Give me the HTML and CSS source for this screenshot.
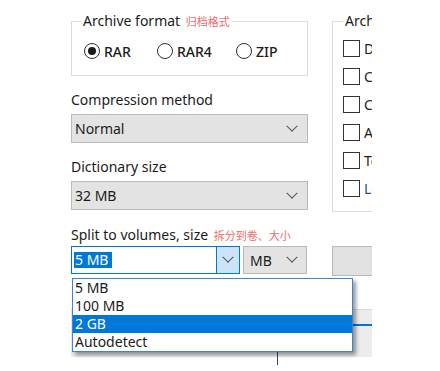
FILE: index.html
```html
<!DOCTYPE html>
<html>
<head>
<meta charset="utf-8">
<link rel="stylesheet" href="styles.css">
</head>
<body>
<div class="dialog">
  <div class="top">
    <div class="left">
      <fieldset class="group format">
        <legend>Archive format <span class="cn">归档格式</span></legend>
        <div class="radios">
          <label class="radio r1"><span class="circle checked"></span>RAR</label>
          <label class="radio r2"><span class="circle"></span>RAR4</label>
          <label class="radio r3"><span class="circle"></span>ZIP</label>
        </div>
      </fieldset>
      <div class="label l1">Compression method</div>
      <div class="select">Normal<span class="chev"></span></div>
      <div class="label l2">Dictionary size</div>
      <div class="select">32 MB<span class="chev"></span></div>
    </div>
    <fieldset class="group options">
      <legend>Archive options</legend>
      <div class="checks">
        <div class="check"><span class="box"></span>Delete files after archiving</div>
        <div class="check"><span class="box"></span>Create SFX archive</div>
        <div class="check"><span class="box"></span>Create solid archive</div>
        <div class="check"><span class="box"></span>Add recovery record</div>
        <div class="check"><span class="box"></span>Test archived files</div>
        <div class="check lock"><span class="box"></span>Lock archive</div>
      </div>
    </fieldset>
  </div>
  <div class="label l3">Split to volumes, size <span class="cn">拆分到卷、大小</span></div>
  <div class="split-row">
    <div class="combo">
      <span class="sel-text">5 MB</span>
      <span class="combo-btn"><span class="chev"></span></span>
    </div>
    <div class="select unit">MB<span class="chev"></span></div>
    <div class="button"></div>
  </div>
  <div class="strip">
    <div class="ok"></div>
  </div>
  <ul class="dropdown">
    <li>5 MB</li>
    <li>100 MB</li>
    <li class="active">2 GB</li>
    <li>Autodetect</li>
  </ul>
</div>
</body>
</html>
```
FILE: styles.css
```css
html, body {
  margin: 0;
  padding: 0;
  background: #fff;
}
body {
  font-family: "Noto Sans", "Noto Sans CJK SC", sans-serif;
  font-size: 14px;
  color: #1b1b1b;
}
.dialog {
  position: relative;
  margin-left: 71px;
  width: 301px;
  height: 371px;
  overflow: hidden;
}
.top {
  display: flex;
  align-items: flex-start;
  gap: 24px;
  padding-top: 12px;
}
.left {
  width: 237px;
  flex: none;
}
.group {
  margin: 0;
  border: 1px solid #dcdcdc;
  padding: 0 0 0 9px;
  min-width: 0;
}
.group legend {
  padding: 0 2px;
  line-height: 18px;
  height: 18px;
  white-space: nowrap;
}
.cn {
  font-family: "Noto Sans CJK SC", sans-serif;
  font-size: 11px;
  color: #f06a6a;
  margin-left: 2px;
}
.format {
  width: 237px;
  box-sizing: border-box;
  height: 64px;
  padding-top: 12px;
}
.radios {
  display: flex;
  align-items: center;
  height: 18px;
  margin-left: 3px;
}
.radio {
  display: flex;
  align-items: center;
  gap: 4px;
  font-weight: 500;
}
.r1 { width: 73px; }
.r2 { width: 79px; }
.circle {
  width: 14px;
  height: 14px;
  border: 1.5px solid #333;
  border-radius: 50%;
  display: flex;
  align-items: center;
  justify-content: center;
}
.circle.checked::after {
  content: "";
  width: 8px;
  height: 8px;
  border-radius: 50%;
  background: #1b1b1b;
}
.label {
  line-height: 18px;
  height: 18px;
  white-space: nowrap;
}
.l1 { margin-top: 15px; }
.l2 { margin-top: 15px; }
.select {
  position: relative;
  margin-top: 5px;
  height: 29px;
  box-sizing: border-box;
  background: #e3e3e3;
  border: 1px solid #b9b9b9;
  display: flex;
  align-items: center;
  padding-left: 3px;
}
.select .chev {
  margin-left: auto;
  margin-right: 11px;
}
.chev {
  width: 7px;
  height: 7px;
  border-right: 1.3px solid #555;
  border-bottom: 1.3px solid #555;
  transform: rotate(45deg) translate(-2px, -2px);
}
.options {
  flex: none;
  width: 200px;
  height: 200px;
  box-sizing: border-box;
  padding-left: 10px;
}
.checks {
  display: flex;
  flex-direction: column;
  gap: 11px;
  padding-top: 10px;
}
.check {
  display: flex;
  align-items: center;
  gap: 4px;
  height: 17px;
  white-space: nowrap;
}
.check.lock { color: #2a4f8f; }
.box {
  width: 15px;
  height: 15px;
  border: 1px solid #333;
  flex: none;
}
.l3 { margin-top: 14px; }
.split-row {
  display: flex;
  align-items: flex-start;
  margin-top: 2px;
}
.split-row > * { flex: none; }
.combo {
  width: 169px;
  height: 28px;
  box-sizing: border-box;
  border: 1px solid #0078d7;
  background: #fff;
  display: flex;
  align-items: center;
  padding-left: 2px;
}
.sel-text {
  background: #0078d7;
  color: #fff;
  line-height: 16px;
  padding: 0 4px 0 1px;
}
.combo-btn {
  margin-left: auto;
  width: 23px;
  height: 26px;
  box-sizing: border-box;
  background: #cce4f7;
  border-left: 1px solid #0078d7;
  display: flex;
  align-items: center;
  justify-content: center;
}
.select.unit {
  margin-top: 0;
  margin-left: 3px;
  width: 64px;
  height: 28px;
  padding-left: 6px;
}
.select.unit .chev { margin-right: 10px; }
.button {
  margin-left: 25px;
  width: 60px;
  height: 30px;
  box-sizing: border-box;
  background: #e1e1e1;
  border: 1px solid #b9b9b9;
}
.strip {
  margin-top: 33px;
  margin-left: -3px;
  height: 47px;
  background: #ececec;
  border-top: 1px solid #dadada;
  position: relative;
}
.ok {
  margin-left: 209px;
  margin-top: 14px;
  height: 39px;
  border-top: 2px solid #0078d7;
  border-left: 1.5px solid #2a4a7a;
}
.dropdown {
  position: absolute;
  left: 1px;
  top: 278px;
  width: 281px;
  box-sizing: border-box;
  margin: 0;
  padding: 0;
  list-style: none;
  background: #fff;
  border: 1px solid #3b86d4;
  box-shadow: 3px 3px 4px rgba(0, 0, 0, 0.4);
}
.dropdown li {
  height: 18px;
  line-height: 18px;
  padding-left: 2px;
}
.dropdown li.active {
  background: #0078d7;
  color: #fff;
}
```
